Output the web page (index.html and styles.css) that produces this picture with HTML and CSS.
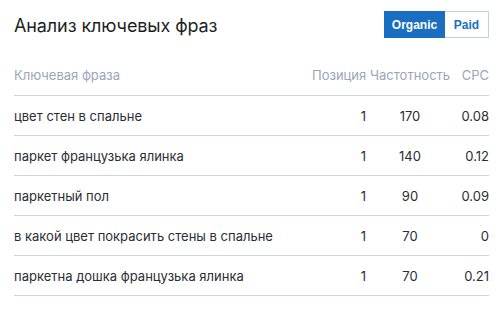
FILE: index.html
```html
<!DOCTYPE html>
<html lang="ru">
<head>
<meta charset="utf-8">
<link rel="stylesheet" href="styles.css">
</head>
<body>
<div class="card">
  <div class="top">
    <h1 class="title">Анализ ключевых фраз</h1>
    <div class="toggle">
      <span class="tbtn active">Organic</span>
      <span class="tbtn">Paid</span>
    </div>
  </div>
  <div class="table">
    <div class="row head">
      <div class="c1">Ключевая фраза</div>
      <div class="c2">Позиция</div>
      <div class="c3">Частотность</div>
      <div class="c4">CPC</div>
    </div>
    <div class="row">
      <div class="c1">цвет стен в спальне</div>
      <div class="c2">1</div>
      <div class="c3">170</div>
      <div class="c4">0.08</div>
    </div>
    <div class="row">
      <div class="c1">паркет французька ялинка</div>
      <div class="c2">1</div>
      <div class="c3">140</div>
      <div class="c4">0.12</div>
    </div>
    <div class="row">
      <div class="c1">паркетный пол</div>
      <div class="c2">1</div>
      <div class="c3">90</div>
      <div class="c4">0.09</div>
    </div>
    <div class="row">
      <div class="c1">в какой цвет покрасить стены в спальне</div>
      <div class="c2">1</div>
      <div class="c3">70</div>
      <div class="c4">0</div>
    </div>
    <div class="row">
      <div class="c1">паркетна дошка французька ялинка</div>
      <div class="c2">1</div>
      <div class="c3">70</div>
      <div class="c4">0.21</div>
    </div>
  </div>
</div>
</body>
</html>
```
FILE: styles.css
```css
html, body {
  margin: 0;
  padding: 0;
  background: #ffffff;
}
body {
  font-family: Inter, "Noto Sans", sans-serif;
  color: #2a2d33;
}
.card {
  padding: 11px 14px 0 14px;
  width: 475px;
}
.top {
  display: flex;
  justify-content: space-between;
  align-items: center;
  height: 28px;
}
.title {
  margin: 0;
  font-size: 18px;
  font-weight: 400;
  color: #1c1f26;
  letter-spacing: -0.1px;
}
.toggle {
  display: flex;
  height: 27px;
  align-self: flex-start;
}
.tbtn {
  display: flex;
  align-items: center;
  justify-content: center;
  font-family: "Liberation Sans", Arial, sans-serif;
  font-weight: 700;
  font-size: 12px;
  box-sizing: border-box;
}
.tbtn.active {
  background: #1a6ec2;
  color: #ffffff;
  width: 61px;
}
.tbtn:not(.active) {
  color: #1a6ec2;
  border: 1px solid #c6cfdf;
  border-left: none;
  width: 44px;
}
.table {
  margin-top: 24px;
}
.row {
  display: grid;
  grid-template-columns: 1fr 54px 88px 35px;
  align-items: center;
  box-sizing: border-box;
  height: 40px;
  border-bottom: 1px solid #cdd3e1;
  font-size: 13px;
}
.row.head {
  height: 33px;
  padding-top: 4px;
  align-items: start;
  color: #9ba4bb;
}
.c2 { text-align: right; }
.c3 { text-align: center; }
.c4 { text-align: right; }
```
